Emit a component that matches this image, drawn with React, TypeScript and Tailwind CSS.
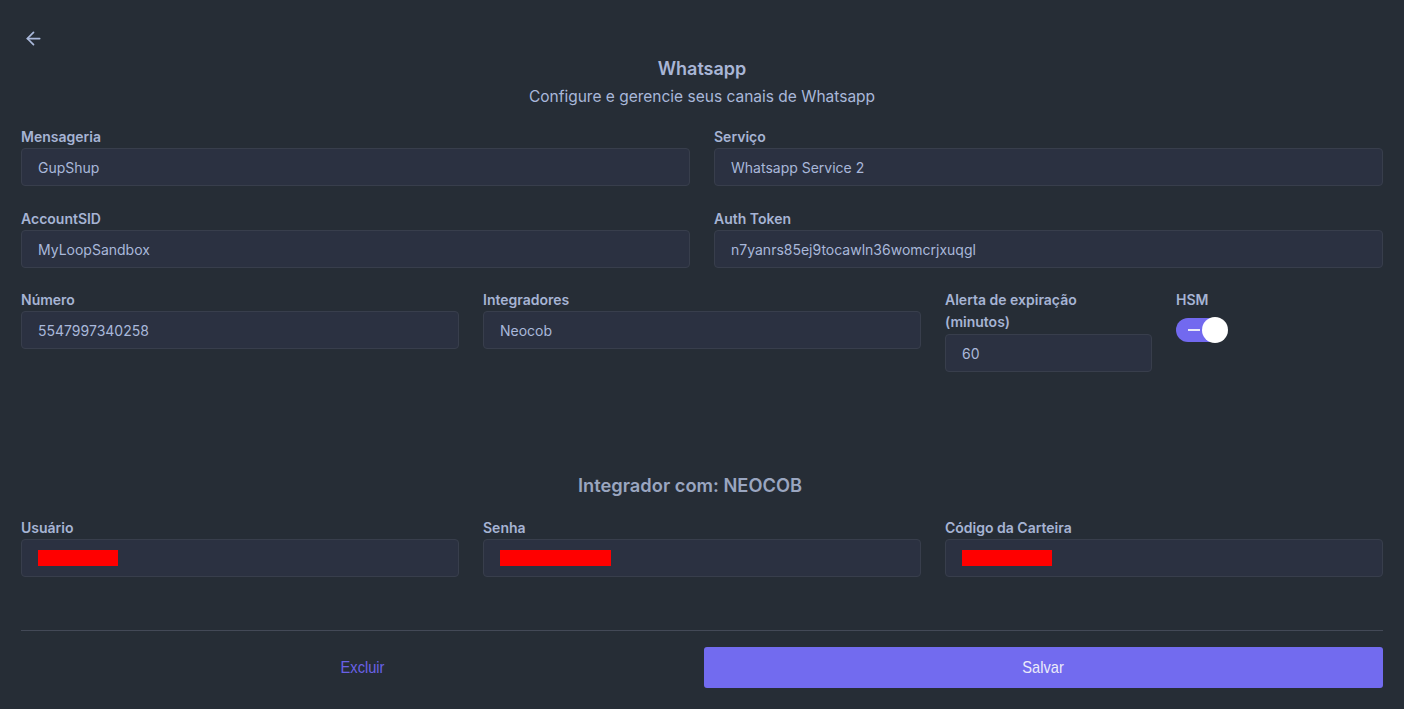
import React from "react";

const font = { fontFamily: "Inter, 'Noto Sans', sans-serif" };

function Field({ label, value, redacted, redW }: { label: React.ReactNode; value?: string; redacted?: boolean; redW?: string }) {
  return (
    <div className="flex flex-col">
      <div className="text-[14px] leading-[22px] font-semibold text-[#a6b4d4]">{label}</div>
      <div className="h-[38px] rounded-[4px] border border-[#383e4c] bg-[#2b3141] flex items-center pl-4 text-[14px] text-[#a9b8da]">
        {redacted ? <span className={`block h-[16px] bg-[#ff0000] ${redW}`} /> : value}
      </div>
    </div>
  );
}

export default function App() {
  return (
    <div className="min-h-[709px] w-full bg-[#262d36] px-[21px]" style={font}>
      <div className="pt-[28px] pl-[2px] h-[56px]">
        <svg width="21" height="21" viewBox="0 0 24 24" fill="none" stroke="#a9b8da" strokeWidth="2" strokeLinecap="round" strokeLinejoin="round">
          <path d="M19 12H5" />
          <path d="M12 19l-7-7 7-7" />
        </svg>
      </div>
      <div className="text-center">
        <div className="text-[18px] leading-[26px] font-semibold text-[#a9b6d6]">Whatsapp</div>
        <div className="text-[15.5px] leading-[28px] text-[#a9b8da] mt-[1px]">Configure e gerencie seus canais de Whatsapp</div>
      </div>
      <div className="grid grid-cols-2 gap-x-6 mt-[15px]">
        <Field label="Mensageria" value="GupShup" />
        <Field label="Serviço" value="Whatsapp Service 2" />
      </div>
      <div className="grid grid-cols-2 gap-x-6 mt-[22px]">
        <Field label="AccountSID" value="MyLoopSandbox" />
        <Field label="Auth Token" value="n7yanrs85ej9tocawln36womcrjxuqgl" />
      </div>
      <div className="grid grid-cols-3 gap-x-6 mt-[21px]">
        <Field label="Número" value="5547997340258" />
        <Field label="Integradores" value="Neocob" />
        <div className="grid grid-cols-2 gap-x-6">
          <div className="flex flex-col">
            <div className="text-[14px] leading-[22px] font-semibold text-[#a6b4d4]">Alerta de expiração<br />(minutos)</div>
            <div className="mt-[1px] h-[38px] rounded-[4px] border border-[#383e4c] bg-[#2b3141] flex items-center pl-4 text-[14px] text-[#a9b8da]">60</div>
          </div>
          <div className="flex flex-col">
            <div className="text-[14px] leading-[22px] font-semibold text-[#a6b4d4]">HSM</div>
            <div className="relative mt-[6px] h-[26px] w-[52px]">
              <div className="absolute left-0 top-[1px] h-[24px] w-[48px] rounded-full bg-[#7269ef]" />
              <div className="absolute left-[12px] top-[12px] h-[2px] w-[12px] bg-[#e8e8f8]" />
              <div className="absolute left-[26px] top-0 h-[26px] w-[26px] rounded-full bg-white" />
            </div>
          </div>
        </div>
      </div>
      <div className="text-center mt-[100px] pr-[24px] text-[18.3px] leading-[26px] font-semibold text-[#9aa6c0]">Integrador com: NEOCOB</div>
      <div className="grid grid-cols-3 gap-x-6 mt-[19px]">
        <Field label="Usuário" redacted redW="w-[80px]" />
        <Field label="Senha" redacted redW="w-[111px]" />
        <Field label="Código da Carteira" redacted redW="w-[90px]" />
      </div>
      <div className="mt-[53px] border-t border-[#434957]" />
      <div className="flex mt-[16px] h-[41px]">
        <button className="flex-1 flex items-center justify-center text-[17px] text-[#6a61e6]" style={{ fontFamily: "'Liberation Sans', sans-serif" }}>
          <span className="inline-block scale-x-[0.86]">Excluir</span>
        </button>
        <button className="w-[679px] rounded-[3px] bg-[#726bef] flex items-center justify-center text-[17px] text-[#ececfa]" style={{ fontFamily: "'Liberation Sans', sans-serif" }}>
          <span className="inline-block scale-x-[0.86]">Salvar</span>
        </button>
      </div>
    </div>
  );
}
